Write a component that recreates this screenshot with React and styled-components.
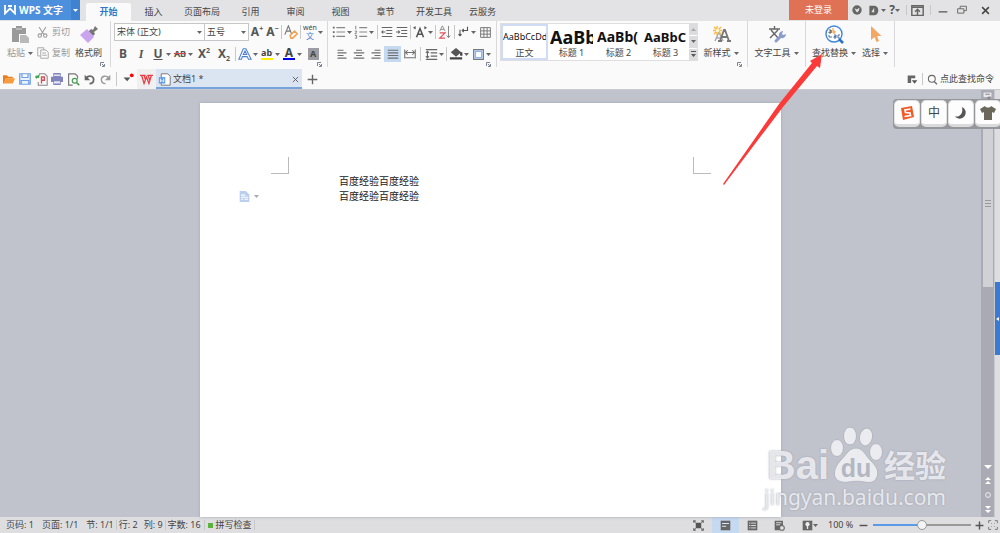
import { useState } from 'react';
import styled, { createGlobalStyle } from 'styled-components';

const tabs = ['插入', '页面布局', '引用', '审阅', '视图', '章节', '开发工具', '云服务'];

const styleList = [
  { id: 1, sample: 'AaBbCcDd', name: '正文', size: 9, weight: 400 },
  { id: 2, sample: 'AaBb', name: '标题 1', size: 18, weight: 700 },
  { id: 3, sample: 'AaBb(', name: '标题 2', size: 14, weight: 700 },
  { id: 4, sample: 'AaBbC', name: '标题 3', size: 13, weight: 700 },
];

const lines = ['百度经验百度经验', '百度经验百度经验'];

function Icon({ size = 14, children }) {
  return (
    <StIcon width={size} height={size} viewBox="0 0 16 16" aria-hidden="true">
      {children}
    </StIcon>
  );
}

function Caret() {
  return (
    <StCaret width="5" height="3" viewBox="0 0 5 3" aria-hidden="true">
      <path d="M0 0h5L2.5 3z" />
    </StCaret>
  );
}

function Tool({ label, width, caret, active, children }) {
  return (
    <StTool type="button" aria-label={label} $width={width} $active={active}>
      <span>{children}</span>
      {caret && <Caret />}
    </StTool>
  );
}

function Launcher() {
  return (
    <StLauncher type="button" aria-label="更多设置">
      <svg width="5" height="5" viewBox="0 0 5 5" fill="none" stroke="#7d8496">
        <path d="M.5 4V.5H4M2 4.5h2.5V2M2 2l2 2" />
      </svg>
    </StLauncher>
  );
}

function TitleBar() {
  return (
    <StTitleBar>
      <StBrand type="button">
        <svg width="12" height="10" viewBox="0 0 12 10" fill="none" stroke="#fff" strokeWidth="1.8">
          <path d="M1 0v8.500l5-5 5 5V0M4 1h4" />
        </svg>
        <strong>WPS 文字</strong>
        <i>
          <Caret />
        </i>
      </StBrand>
      <StTabs>
        <StTab type="button" $active>
          开始
        </StTab>
        {tabs.map(tab => (
          <StTab key={tab} type="button" $wide={tab.length > 3}>
            {tab}
          </StTab>
        ))}
      </StTabs>
      <StLogin type="button">未登录</StLogin>
      <StWindow>
        <Tool label="皮肤" width={17}>
          <Icon size={10}>
            <circle cx="8" cy="8" r="7.500" fill="#666" />
            <path d="M4 5l4 2 4-3-1 5-3 3-2-3z" fill="#e3e3e5" />
          </Icon>
        </Tool>
        <Tool label="文档" caret>
          <Icon size={11}>
            <path d="M2 1h7a6 7 0 010 14H2z" fill="#666" />
            <path d="M5 10l4-6v7z" fill="#e3e3e5" />
          </Icon>
        </Tool>
        <Tool label="帮助" width={16} caret>
          <b>?</b>
        </Tool>
        <StSep $width={7} $height={10} />
        <Tool label="隐藏功能区" width={15}>
          <Icon size={13}>
            <path d="M1 2h14v12H1zM1 4h14M8 14V7M5 9.500L8 6.500l3 3" fill="none" stroke="#666" strokeWidth="1.800" />
          </Icon>
        </Tool>
        <StSep $width={10} $height={10} />
        <Tool label="最小化" width={15}>
          <Icon size={10}>
            <path d="M1 11h14" stroke="#555" strokeWidth="2" />
          </Icon>
        </Tool>
        <Tool label="还原" width={24}>
          <Icon size={10}>
            <path d="M1 6h10v7H1zM5 6V2h10v7h-4" fill="none" stroke="#666" strokeWidth="1.500" />
          </Icon>
        </Tool>
        <Tool label="关闭" width={22}>
          <Icon size={9}>
            <path d="M2 2l12 12M14 2L2 14" stroke="#444" strokeWidth="2.600" />
          </Icon>
        </Tool>
      </StWindow>
    </StTitleBar>
  );
}

function ClipboardGroup() {
  return (
    <StGroup>
      <StBigButton type="button" $width={34} $muted>
        <svg width="19" height="19" viewBox="0 0 19 19" fill="#9a9a9a">
          <path d="M1 3h4V1h6v2h4v6H8v8H1z" />
          <path d="M5 4h6" stroke="#d5d5d5" />
          <path d="M9 10h6l3 3v5H9z" fill="#b9b9b9" />
        </svg>
        <em>
          粘贴 <Caret />
        </em>
      </StBigButton>
      <StStack>
        <StSmallButton type="button">
          <Icon size={11}>
            <path d="M3 0l7 11M13 0L6 11" stroke="#999" strokeWidth="1.500" />
            <circle cx="4" cy="12.500" r="2.500" fill="none" stroke="#999" strokeWidth="1.500" />
            <circle cx="12" cy="12.500" r="2.500" fill="none" stroke="#999" strokeWidth="1.500" />
          </Icon>
          剪切
        </StSmallButton>
        <StSmallButton type="button">
          <Icon size={12}>
            <path d="M4 12H1V1h8v3M5 4h7l3 3v8H5zM7 8h5M7 11h6" fill="none" stroke="#aaa" strokeWidth="1.300" />
          </Icon>
          复制
        </StSmallButton>
      </StStack>
      <StBigButton type="button" $width={37}>
        <svg width="19" height="19" viewBox="0 0 19 19">
          <path d="M10 6l2-2 2 1 2-4 3 3-4 3 1 2-2 2-5-5z" fill="#777" />
          <path d="M8 4l7 8-6 6-8-8z" fill="#cba4f0" />
        </svg>
        <em>格式刷</em>
      </StBigButton>
      <Launcher />
    </StGroup>
  );
}

function FontGroup() {
  return (
    <StGroup>
      <StRows>
        <StRow>
          <StSelect $width={91}>
            <select aria-label="字体" defaultValue="宋体 (正文)">
              <option>宋体 (正文)</option>
              <option>黑体</option>
            </select>
            <Caret />
          </StSelect>
          <StSelect $width={44}>
            <select aria-label="字号" defaultValue="五号">
              <option>五号</option>
              <option>四号</option>
            </select>
            <Caret />
          </StSelect>
          <Tool label="增大字号" width={16}>
            <b>
              A<sup>+</sup>
            </b>
          </Tool>
          <Tool label="减小字号" width={15}>
            <b>
              A<sup>−</sup>
            </b>
          </Tool>
          <StSep $width={3} />
          <Tool label="清除格式" width={16}>
            <Icon>
              <path d="M1 11L5 1l4 10M2.500 7h5" fill="none" stroke="#777" strokeWidth="1.300" />
              <path d="M7 12l5-5 3 3-5 5H8z" fill="#fff" stroke="#f1a14e" strokeWidth="1.800" />
            </Icon>
          </Tool>
          <StSep $width={3} />
          <Tool label="拼音指南" caret>
            <StPinyin>
              <small>wén</small>
              <small>文</small>
            </StPinyin>
          </Tool>
        </StRow>
        <StRow>
          <Tool label="加粗">
            <b>B</b>
          </Tool>
          <Tool label="倾斜">
            <StSerif>I</StSerif>
          </Tool>
          <Tool label="下划线" caret>
            <u>U</u>
          </Tool>
          <Tool label="删除线" caret>
            <s>AB</s>
          </Tool>
          <Tool label="上标" width={20}>
            <b>
              X<sup>2</sup>
            </b>
          </Tool>
          <Tool label="下标" width={20}>
            <b>
              X<sub>2</sub>
            </b>
          </Tool>
          <StSep $width={3} />
          <Tool label="文字效果" caret>
            <Icon>
              <path d="M1 14L6 2h3l6 12h-3l-1.500-3H5l-1 3zM6 8.500h4L8 4.500z" fill="#fff" stroke="#4d80cf" strokeWidth="1.200" />
            </Icon>
          </Tool>
          <Tool label="突出显示" caret>
            <StBar $color="#ffef00">
              ab
              <svg width="6" height="9" viewBox="0 0 6 9">
                <path d="M0 8l1-3 4-5" stroke="#555" strokeWidth="2" fill="none" />
              </svg>
            </StBar>
          </Tool>
          <Tool label="字体颜色" caret>
            <StBar $color="#0000f0" $strong>
              A
            </StBar>
          </Tool>
          <Tool label="字符底纹" width={20}>
            <StShade>A</StShade>
          </Tool>
        </StRow>
      </StRows>
      <Launcher />
    </StGroup>
  );
}

const alignList = [
  { id: 'left', label: '左对齐', d: 'M2 3h8M2 6.500h12M2 10h8M2 13.500h12' },
  { id: 'center', label: '居中', d: 'M4 3h8M1 6.500h14M4 10h8M1 13.500h14' },
  { id: 'right', label: '右对齐', d: 'M6 3h8M2 6.500h12M6 10h8M2 13.500h12' },
  { id: 'justify', label: '两端对齐', d: 'M1 3h14M1 6.500h14M1 10h14M1 13.500h14' },
  { id: 'spread', label: '分散对齐', d: 'M1 2v12M15 2v12M2 13h12M2 6h12M5 3L2 6l3 3M11 3l3 3-3 3' },
];

function ParagraphGroup() {
  const [align, setAlign] = useState('justify');

  return (
    <StGroup>
      <StRows>
        <StRow>
          <Tool label="项目符号" caret>
            <Icon>
              <path d="M1 2h2v2H1zM1 7h2v2H1zM1 12h2v2H1z" fill="#666" />
              <path d="M5 3h10M5 8h10M5 13h10" stroke="#888" strokeWidth="1.300" />
            </Icon>
          </Tool>
          <Tool label="编号" caret>
            <Icon>
              <path d="M2 1v4M1 7h2v1L1 10h2M1 12h2v3H1" stroke="#777" fill="none" />
              <path d="M6 3h9M6 8h9M6 13h9" stroke="#888" strokeWidth="1.300" />
            </Icon>
          </Tool>
          <StSep $width={4} />
          <Tool label="减少缩进" width={15}>
            <Icon size={12}>
              <path d="M1 2h14M7 6h8M7 10h8M1 14h14M6 8H1M3 6L1 8l2 2" fill="none" stroke="#666" strokeWidth="1.400" />
            </Icon>
          </Tool>
          <Tool label="增加缩进" width={15}>
            <Icon size={12}>
              <path d="M1 2h14M7 6h8M7 10h8M1 14h14M0 8h5M3 6l2 2-2 2" fill="none" stroke="#666" strokeWidth="1.400" />
            </Icon>
          </Tool>
          <StSep $width={3} />
          <Tool label="中文版式" caret>
            <Icon>
              <path d="M4 14L8 4l4 10M5.500 10.500h5" fill="none" stroke="#555" strokeWidth="1.800" />
              <path d="M0 3l3-2v4zM16 3l-3-2v4z" fill="#555" />
            </Icon>
          </Tool>
          <StSep $width={3} />
          <Tool label="排序" width={16}>
            <Icon>
              <path d="M2 7l3-6 3 6M3 5h4" fill="none" stroke="#888" />
              <path d="M2 9h6l-6 6h6" fill="none" stroke="#e0525d" strokeWidth="1.400" />
              <path d="M12 1v13M10 12l2 2.500 2-2.500" fill="none" stroke="#777" />
            </Icon>
          </Tool>
          <StSep $width={2} />
          <Tool label="显示标记" caret>
            <Icon size={12}>
              <path d="M14 1v5H7M9 4L7 6l2 2M4 5v8M2 11l2 2 2-2" fill="none" stroke="#555" strokeWidth="1.500" />
            </Icon>
          </Tool>
          <Tool label="表格" width={16}>
            <Icon size={13}>
              <path d="M2 2h12v12H2zM2 6h12M2 10h12M6 2v12M10 2v12" fill="none" stroke="#777" strokeWidth="1.200" />
            </Icon>
          </Tool>
        </StRow>
        <StRow $indent={2}>
          {alignList.map(item => (
            <StTool
              key={item.id}
              type="button"
              aria-label={item.label}
              $width={17}
              $active={align === item.id}
              onClick={() => setAlign(item.id)}
            >
              <Icon size={12}>
                <path d={item.d} fill="none" stroke="#6f6f6f" strokeWidth="1.400" />
              </Icon>
            </StTool>
          ))}
          <StSep $width={5} />
          <Tool label="行距" caret>
            <Icon size={13}>
              <path d="M1 2h14M7 6h8M7 10h8M1 14h14M3 4v8M1 6l2-2 2 2M1 10l2 2 2-2" fill="none" stroke="#666" strokeWidth="1.300" />
            </Icon>
          </Tool>
          <StSep $width={3} />
          <Tool label="填充" caret>
            <Icon>
              <path d="M2 6l6-5 6 5-6 5z" fill="#555" />
              <path d="M14 6v4M1 13h14" stroke="#444" strokeWidth="2.600" />
            </Icon>
          </Tool>
          <Tool label="边框" caret>
            <Icon size={13}>
              <path d="M2 2h12v12H2z" fill="#fff" stroke="#777" strokeWidth="1.400" />
              <path d="M4 4h8v8H4z" fill="#fff" stroke="#8eb4ea" strokeWidth="2" />
            </Icon>
          </Tool>
        </StRow>
      </StRows>
      <Launcher />
    </StGroup>
  );
}

function StyleGroup() {
  return (
    <StGroup>
      <StGallery>
        {styleList.map(item => (
          <StStyleCell key={item.id} type="button" $active={item.id === 1} $size={item.size} $weight={item.weight}>
            <strong>{item.sample}</strong>
            <span>{item.name}</span>
          </StStyleCell>
        ))}
        <StGalleryScroll>
          <button type="button" aria-label="上一行">
            <svg width="5" height="3" viewBox="0 0 5 3" fill="#aaa">
              <path d="M0 3h5L2.500 0z" />
            </svg>
          </button>
          <button type="button" aria-label="下一行">
            <Caret />
          </button>
          <button type="button" aria-label="全部样式">
            <svg width="5" height="6" viewBox="0 0 5 6" fill="#555">
              <path d="M0 0h5v1H0zM0 3h5L2.500 6z" />
            </svg>
          </button>
        </StGalleryScroll>
      </StGallery>
      <StBigButton type="button" $width={46}>
        <svg width="19" height="19" viewBox="0 0 19 19">
          <path d="M3 16l4-9 4 9M5 13h5" fill="none" stroke="#aaa" strokeWidth="1.500" />
          <path d="M8 16l4-11h1l4 11M9 12h7M6 16h4M15 16h4" fill="none" stroke="#777" strokeWidth="1.800" />
          <path d="M5 1v9M1 5.500h9M2 2l7 7M9 2L2 9" stroke="#f5b942" strokeWidth="1.400" />
          <circle cx="5.500" cy="5.500" r="1.800" fill="#fff6d6" />
        </svg>
        <em>
          新样式 <Caret />
        </em>
      </StBigButton>
      <Launcher />
    </StGroup>
  );
}

function Ribbon() {
  return (
    <StRibbon>
      <ClipboardGroup />
      <FontGroup />
      <ParagraphGroup />
      <StyleGroup />
      <StGroup>
        <StBigButton type="button" $width={51}>
          <svg width="19" height="19" viewBox="0 0 19 19">
            <path d="M2 4h11M7.500 1v3M4 5l7 8M11 5l-8 8" fill="none" stroke="#666" strokeWidth="1.400" />
            <path d="M9 16l5-5" stroke="#8a9dcb" strokeWidth="3" strokeLinecap="round" />
            <path d="M12 11a4 4 0 014-5l-1 3 1.500 1 2.500-1a4 4 0 01-5 4z" fill="#8a9dcb" />
          </svg>
          <em>
            文字工具 <Caret />
          </em>
        </StBigButton>
      </StGroup>
      <StGroup>
        <StBigButton type="button" $width={50}>
          <svg width="19" height="19" viewBox="0 0 19 19">
            <circle cx="9" cy="9" r="8" fill="#fff" stroke="#3f86dc" strokeWidth="1.400" />
            <path d="M14 14l4 4" stroke="#2f72c8" strokeWidth="2.600" />
            <path d="M4 5h2v3H4V7h2M6 8V5" fill="none" stroke="#666" />
            <path d="M8 3v5h2V6H8" fill="none" stroke="#f09a3e" />
            <path d="M4 10v2h3M9 10h2v3H9v-1.500h2M15 10h-2v3h2" fill="none" stroke="#4b6fa8" />
          </svg>
          <em>
            查找替换 <Caret />
          </em>
        </StBigButton>
        <StBigButton type="button" $width={32}>
          <svg width="19" height="19" viewBox="0 0 19 19">
            <path d="M5 1v14l3.500-3 2 5 2.500-1-2-5h4.500z" fill="#f2a765" />
          </svg>
          <em>
            选择 <Caret />
          </em>
        </StBigButton>
      </StGroup>
    </StRibbon>
  );
}

function QuickBar() {
  return (
    <StQuickBar>
      <Tool label="打开" width={16}>
        <Icon size={12}>
          <path d="M0 3h5l2 2h6v2H4l-3 7H0z" fill="#e87e1c" />
          <path d="M4 7h12l-3 7H1z" fill="#f79b3c" />
        </Icon>
      </Tool>
      <Tool label="保存" width={16}>
        <Icon size={12}>
          <path d="M1 1h14v14H1zM4 1v5h8V1M3 10h10v5H3z" fill="#eaf2fd" stroke="#6d9fe6" strokeWidth="1.600" />
        </Icon>
      </Tool>
      <Tool label="输出为PDF" width={16}>
        <Icon size={13}>
          <path d="M5 1h7l3 3v11H4v-4" fill="none" stroke="#888" strokeWidth="1.300" />
          <path d="M8 13V5h3.500v4H8" fill="none" stroke="#d94d58" strokeWidth="1.700" />
          <path d="M6 1L2 4v-2l-2 3 2 3V6h3z" fill="#42a556" />
        </Icon>
      </Tool>
      <Tool label="打印" width={16}>
        <Icon size={12}>
          <path d="M3 0h10v5H3zM0 5h16v7H0zM3 10h10v6H3z" fill="#8185bb" />
          <path d="M4 2h8v2H4zM4 11h8v3H4z" fill="#e5e5f4" />
        </Icon>
      </Tool>
      <Tool label="打印预览" width={16}>
        <Icon size={13}>
          <path d="M7 15H2V1h8l3 3v3" fill="none" stroke="#777" strokeWidth="1.400" />
          <circle cx="9.500" cy="9.500" r="3" fill="none" stroke="#4b9e55" strokeWidth="1.500" />
          <path d="M12 12l3 3" stroke="#4b9e55" strokeWidth="2" />
        </Icon>
      </Tool>
      <Tool label="撤销" width={16}>
        <Icon size={11}>
          <path d="M3 6c4-5 11-3 11 2 0 4-3 6-6 6" fill="none" stroke="#666" strokeWidth="2.500" />
          <path d="M1 1v8h8z" fill="#666" />
        </Icon>
      </Tool>
      <Tool label="恢复" width={16}>
        <Icon size={11}>
          <path d="M13 6C9 1 2 3 2 8c0 4 3 6 6 6" fill="none" stroke="#999" strokeWidth="2" />
          <path d="M15 1v8H7z" fill="#999" />
        </Icon>
      </Tool>
      <StSep $width={6} />
      <Tool label="自定义快速访问" width={18}>
        <Icon size={12}>
          <path d="M2 6h9l-4 5z" fill="#555" />
          <circle cx="13" cy="3" r="2.500" fill="#f00" />
        </Icon>
      </Tool>
      <StHome>
        <Tool label="首页" width={19}>
          <Icon size={13}>
            <path d="M0 3h7M9 3h7M2 3l3 10 3-8 3 8 3-10M5 3l2 6M10 3l2 6" fill="none" stroke="#ea3c45" strokeWidth="1.600" />
          </Icon>
        </Tool>
      </StHome>
      <StDocTab>
        <Icon size={13}>
          <path d="M4 1h8l3 3v11H4z" fill="#fff" stroke="#777" strokeWidth="1.200" />
          <path d="M1 5h8v8H1z" fill="#66a0e6" />
          <path d="M3 7v4l2-2 2 2V7" fill="none" stroke="#fff" />
        </Icon>
        <span>文档1 *</span>
        <Tool label="关闭文档" width={14}>
          <Icon size={7}>
            <path d="M2 2l12 12M14 2L2 14" stroke="#555" strokeWidth="2" />
          </Icon>
        </Tool>
      </StDocTab>
      <Tool label="新建" width={20}>
        <Icon size={11}>
          <path d="M8 1v14M1 8h14" stroke="#666" strokeWidth="2" />
        </Icon>
      </Tool>
      <StCommand>
        <Tool label="窗口" width={16}>
          <Icon size={11}>
            <path d="M1 2h11v4H6v7H1z" fill="#666" />
            <path d="M7 9h8l-4 5z" fill="#555" />
          </Icon>
        </Tool>
        <StSep $width={5} $height={12} />
        <label htmlFor="command">
          <Icon size={11}>
            <circle cx="7" cy="7" r="5" fill="none" stroke="#666" strokeWidth="1.500" />
            <path d="M10.500 11l4 4" stroke="#666" strokeWidth="1.800" />
          </Icon>
        </label>
        <input id="command" aria-label="查找命令" placeholder="点此查找命令" />
      </StCommand>
    </StQuickBar>
  );
}

function Document() {
  return (
    <StPage>
      <StMarks>
        <StMark $side="right" />
        <StMark $side="left" />
      </StMarks>
      <StBody>
        <StTag type="button" aria-label="段落布局">
          <Icon size={11}>
            <path d="M1 0h9l5 5v11H1z" fill="#bccfee" />
            <path d="M3 6h6M3 9h10M3 12h3M8 12h5" stroke="#fff" strokeWidth="1.500" />
          </Icon>
          <Caret />
        </StTag>
        <div>
          {lines.map((line, index) => (
            <p key={index}>{line}</p>
          ))}
        </div>
      </StBody>
    </StPage>
  );
}

function ScrollBar() {
  return (
    <StScroll>
      <StRuler type="button" aria-label="标尺">
        <Icon size={9}>
          <path d="M1 1h14v8H1z" fill="#e8e8ec" />
          <path d="M4 4h8M9 9l5 5M9 14V9h5" stroke="#777" fill="none" strokeWidth="1.500" />
        </Icon>
      </StRuler>
      <StThumb>
        <i />
        <i />
        <i />
      </StThumb>
      <StScrollButtons>
        <svg width="8" height="4" viewBox="0 0 8 4" fill="#fff">
          <path d="M0 0h8L4 4z" />
        </svg>
        <svg width="6" height="7" viewBox="0 0 6 7" fill="#fff">
          <path d="M0 3l3-3 3 3zM0 7l3-3 3 3z" />
        </svg>
        <svg width="6" height="6" viewBox="0 0 6 6" fill="none" stroke="#eee">
          <circle cx="3" cy="3" r="2.400" />
        </svg>
        <svg width="6" height="7" viewBox="0 0 6 7" fill="#fff">
          <path d="M0 0l3 3 3-3zM0 4l3 3 3-3z" />
        </svg>
      </StScrollButtons>
    </StScroll>
  );
}

function InputMethod() {
  return (
    <StIme>
      <StKey type="button" aria-label="搜狗输入法">
        <Icon size={16}>
          <path d="M2 3l11-2 2 11-11 3z" fill="#f05a28" />
          <path d="M11.500 4L6 5l.5 2.500 4.500.5.500 2.500-6 1" fill="none" stroke="#fff" strokeWidth="1.700" />
        </Icon>
      </StKey>
      <StKey type="button">中</StKey>
      <StKey type="button" aria-label="半角">
        <Icon size={14}>
          <path d="M9 1a7 7 0 11-8 11C7 13 11 8 9 1z" fill="#555" />
        </Icon>
      </StKey>
      <StKey type="button" aria-label="皮肤">
        <Icon size={16}>
          <path d="M0 4l5-3c1 2 5 2 6 0l5 3-2 4-2-1v8H4V7L2 8z" fill="#6b675a" />
        </Icon>
      </StKey>
    </StIme>
  );
}

function Watermark() {
  return (
    <StWatermark>
      <StLogo>
        <b>Bai</b>
        <StPaw>
          <svg width="54" height="58" viewBox="0 0 54 58" fill="#ebecf0" stroke="#b4b6c0">
            <ellipse cx="8" cy="22" rx="6.500" ry="8.500" />
            <ellipse cx="21" cy="10" rx="6.500" ry="9" />
            <ellipse cx="37" cy="11" rx="6.500" ry="9" transform="rotate(12 37 11)" />
            <ellipse cx="47" cy="26" rx="6.500" ry="8.500" />
            <path d="M27 22c7 0 9 7 15 13s8 10 6 16-8 6-13 5-10-1-15 0-12 0-14-5 1-12 6-17 8-12 15-12z" />
          </svg>
          <span>du</span>
        </StPaw>
        <strong>经验</strong>
      </StLogo>
      <p>jingyan.baidu.com</p>
    </StWatermark>
  );
}

function StatusBar() {
  const [zoom, setZoom] = useState(100);

  return (
    <StStatus>
      <StInfo>
        <span>页码: 1</span>
        <span>页面: 1/1</span>
        <span>节: 1/1</span>
      </StInfo>
      <StSep $width={5} $height={10} />
      <StInfo $gap={6}>
        <span>行: 2</span>
        <span>列: 9</span>
      </StInfo>
      <StSep $width={5} $height={10} />
      <StInfo>
        <span>字数: 16</span>
      </StInfo>
      <StSep $width={7} $height={10} />
      <StSpell type="button">
        <i />
        拼写检查
      </StSpell>
      <StSep $width={5} $height={10} />
      <StViews>
        <Tool label="全屏显示" width={27}>
          <Icon size={11}>
            <path d="M4 4h8v8H4z" fill="#555" />
            <path d="M1 4V1h3M12 1h3v3M15 12v3h-3M4 15H1v-3M1 1l3 3M15 1l-3 3M1 15l3-3M15 15l-3-3" fill="none" stroke="#666" strokeWidth="1.500" />
          </Icon>
        </Tool>
        <Tool label="页面视图" width={27} active>
          <Icon size={11}>
            <path d="M1 1h14v14H1z" fill="#666" />
            <path d="M3 5h10M3 9h6" stroke="#dde6f4" strokeWidth="1.500" />
          </Icon>
        </Tool>
        <Tool label="大纲视图" width={27}>
          <Icon size={11}>
            <path d="M1 1h14v14H1z" fill="#666" />
            <path d="M3 4.500h2M6 4.500h7M3 8h2M6 8h7M3 11.500h2M6 11.500h7" stroke="#ddd" strokeWidth="1.400" />
          </Icon>
        </Tool>
        <Tool label="网页视图" width={27}>
          <Icon size={11}>
            <path d="M1 1h12v7l-5 7H1z" fill="#666" />
            <path d="M3 4h8M3 7h6" stroke="#ddd" strokeWidth="1.400" />
            <circle cx="11.500" cy="11.500" r="3.500" fill="#ddd" stroke="#666" strokeWidth="1.500" />
          </Icon>
        </Tool>
        <Tool label="护眼模式" width={35} caret>
          <Icon size={11}>
            <path d="M1 1h14v14H1z" fill="#666" />
            <circle cx="8" cy="6" r="3" fill="#eee" />
            <path d="M8 8v5" stroke="#eee" strokeWidth="2" />
          </Icon>
        </Tool>
        <StPercent>{zoom} %</StPercent>
        <Tool label="缩小" width={15}>
          <Icon size={9}>
            <path d="M1 8h14" stroke="#555" strokeWidth="2.600" />
          </Icon>
        </Tool>
        <StRange
          type="range"
          aria-label="显示比例"
          min="0"
          max="200"
          value={zoom}
          onChange={event => setZoom(Number(event.target.value))}
        />
        <Tool label="放大" width={14}>
          <Icon size={9}>
            <path d="M1 8h14M8 1v14" stroke="#555" strokeWidth="2.600" />
          </Icon>
        </Tool>
        <Tool label="最佳缩放" width={14}>
          <Icon size={10}>
            <path d="M1 5V1h4M11 1h4v4M15 11v4h-4M5 15H1v-4M5 5l1 1M11 5l-1 1M5 11l1-1M11 11l-1-1" fill="none" stroke="#777" strokeWidth="1.500" />
          </Icon>
        </Tool>
      </StViews>
    </StStatus>
  );
}

function App() {
  return (
    <StApp>
      <GlobalStyle />
      <TitleBar />
      <Ribbon />
      <QuickBar />
      <StWorkspace>
        <StCanvas>
          <Document />
        </StCanvas>
        <ScrollBar />
        <StSide>
          <button type="button" aria-label="展开任务窗格">
            <svg width="3" height="4" viewBox="0 0 3 4" fill="#fff">
              <path d="M3 0v4L0 2z" />
            </svg>
          </button>
        </StSide>
        <InputMethod />
        <Watermark />
      </StWorkspace>
      <StatusBar />
      <StArrow width="104" height="134" viewBox="0 0 104 134" aria-hidden="true">
        <path d="M1 131L57 51 90 10l-2-2L100 1l-2 14-3-2L61 54 2 132z" fill="#fb3a3a" />
      </StArrow>
    </StApp>
  );
}

export default App;

const GlobalStyle = createGlobalStyle`
  * {
    box-sizing: border-box;
  }
  body {
    margin: 0;
    overflow: hidden;
  }
  body, button, input, select {
    font-family: 'Noto Sans', 'Noto Sans CJK SC', sans-serif;
    font-size: 9px;
    line-height: 12px;
    color: #444;
  }
  button {
    padding: 0;
    border: 0;
    background: none;
    white-space: nowrap;
  }
  p {
    margin: 0;
  }
`;

const StApp = styled.div`
  position: relative;
  display: flex;
  flex-direction: column;
  min-height: 100vh;
`;

const StIcon = styled.svg`
  flex-shrink: 0;
`;

const StCaret = styled.svg`
  flex-shrink: 0;
  fill: #666;
`;

const StTool = styled.button`
  display: flex;
  align-items: center;
  justify-content: center;
  flex-shrink: 0;
  width: ${({ $width }) => ($width ? `${$width}px` : 'auto')};
  min-width: ${({ $width }) => ($width ? 0 : '18px')};
  height: 16px;
  background: ${({ $active }) => ($active ? '#c5d9f1' : 'none')};

  & > span {
    display: flex;
    align-items: center;
    justify-content: center;
    min-width: ${({ $width }) => ($width ? 0 : '16px')};
  }
  & > span + svg {
    margin-right: 1px;
  }
  b,
  u,
  s {
    font-size: 12px;
    font-weight: 700;
    color: #555;
  }
  s {
    font-size: 9px;
    text-decoration-color: #e04848;
  }
  sup,
  sub {
    font-size: 7px;
    line-height: 0;
  }
`;

const StSep = styled.span`
  flex-shrink: 0;
  width: ${({ $width }) => $width}px;
  height: ${({ $height }) => $height || 14}px;
  background: linear-gradient(#c8c8cb, #c8c8cb) center / 1px 100% no-repeat;
`;

const StTitleBar = styled.header`
  display: flex;
  height: 21px;
  background: #e3e3e5;
`;

const StBrand = styled.button`
  display: flex;
  align-items: center;
  width: 80px;
  height: 20px;
  padding-left: 4px;
  background: #4b8fdd;

  strong {
    flex: 1;
    margin-left: 3px;
    text-align: left;
    font-size: 10px;
    color: #fff;
  }
  i {
    display: flex;
    align-items: center;
    justify-content: center;
    width: 9px;
    height: 20px;
    background: #3f82d2;
  }
  i > svg {
    fill: #fff;
  }
`;

const StTabs = styled.nav`
  display: flex;
  align-items: flex-end;
  flex: 1;
  padding-left: 6px;
`;

const StTab = styled.button`
  width: ${({ $wide }) => ($wide ? 52 : 45)}px;
  height: 18px;
  background: ${({ $active }) => ($active ? '#fafafa' : 'none')};
  border-radius: 2px 2px 0 0;
  color: ${({ $active }) => ($active ? '#2f78c8' : '#444')};
  font-weight: ${({ $active }) => ($active ? 700 : 400)};
`;

const StLogin = styled.button`
  width: 59px;
  height: 20px;
  background: #df7255;
  color: #fff;
`;

const StWindow = styled.div`
  display: flex;
  align-items: center;
  width: 152px;
  height: 20px;
`;

const StRibbon = styled.section`
  display: flex;
  height: 48px;
  background: #fafafa;
`;

const StGroup = styled.div`
  position: relative;
  display: flex;
  align-items: flex-start;
  height: 46px;
  padding: 2px 3px 0;
  border-right: 1px solid #d9d9dc;
`;

const StLauncher = styled.button`
  position: absolute;
  right: 5px;
  bottom: 0;
  display: flex;
`;

const StBigButton = styled.button`
  display: flex;
  flex-direction: column;
  align-items: center;
  justify-content: space-between;
  flex-shrink: 0;
  width: ${({ $width }) => $width}px;
  height: 34px;
  margin-top: 2px;
  color: ${({ $muted }) => ($muted ? '#999' : '#444')};

  em {
    display: flex;
    align-items: center;
    gap: 3px;
    font-style: normal;
  }
`;

const StStack = styled.div`
  display: flex;
  flex-direction: column;
  gap: 9px;
  width: 33px;
  padding-top: 3px;
`;

const StSmallButton = styled.button`
  display: flex;
  align-items: center;
  justify-content: space-between;
  color: #999;
`;

const StRows = styled.div`
  display: flex;
  flex-direction: column;
  gap: 4px;
`;

const StRow = styled.div`
  display: flex;
  align-items: center;
  height: 18px;
  padding-left: ${({ $indent }) => $indent || 0}px;
`;

const StSelect = styled.div`
  display: flex;
  align-items: center;
  width: ${({ $width }) => $width}px;
  height: 18px;
  padding-right: 2px;
  border: 1px solid #c6c6c9;
  background: #fff;

  & + & {
    border-left: 0;
  }
  select {
    flex: 1;
    min-width: 0;
    padding: 0 0 0 2px;
    border: 0;
    background: none;
    appearance: none;
  }
`;

const StPinyin = styled.span`
  display: flex;
  flex-direction: column;
  align-items: center;

  small {
    font-size: 7px;
    line-height: 8px;
  }
  small + small {
    font-size: 8px;
    color: #4d80cf;
  }
`;

const StSerif = styled.em`
  font-family: 'Liberation Serif', serif;
  font-size: 12px;
  font-weight: 700;
  color: #555;
`;

const StBar = styled.span`
  display: flex;
  justify-content: center;
  width: 12px;
  height: 12px;
  border-bottom: 2px solid ${({ $color }) => $color};
  font-size: ${({ $strong }) => ($strong ? 12 : 9)}px;
  font-weight: 700;
  line-height: 9px;
`;

const StShade = styled.span`
  width: 11px;
  height: 12px;
  background: #9b9da2;
  font-weight: 700;
`;

const StGallery = styled.div`
  display: flex;
  width: 198px;
  height: 38px;
  border: 1px solid #dedee0;
  background: #fff;
`;

const StStyleCell = styled.button`
  display: flex;
  flex-direction: column;
  flex-shrink: 0;
  width: 47px;
  height: 36px;
  padding-top: 2px;
  border: 1px solid ${({ $active }) => ($active ? '#cfdcf3' : '#fff')};
  box-shadow: ${({ $active }) => ($active ? 'inset 0 0 0 1px #cfdcf3' : 'none')};

  strong {
    width: 43px;
    margin: 0 auto;
    overflow: hidden;
    text-align: left;
    font-size: ${({ $size }) => $size}px;
    font-weight: ${({ $weight }) => $weight};
    line-height: 20px;
    color: #111;
  }
  span {
    align-self: center;
  }
`;

const StGalleryScroll = styled.div`
  display: flex;
  flex-direction: column;
  flex: 1;
  gap: 1px;

  button {
    display: flex;
    align-items: center;
    justify-content: center;
    flex: 1;
    background: #dcdcde;
  }
`;

const StQuickBar = styled.section`
  display: flex;
  align-items: center;
  height: 21px;
  padding-left: 1px;
  border-bottom: 1px solid #c9cad1;
  background: #fafafa;
`;

const StHome = styled.div`
  display: flex;
  align-items: center;
  height: 20px;
  background: #f0f0f1;
`;

const StDocTab = styled.div`
  display: flex;
  align-items: center;
  gap: 2px;
  width: 146px;
  height: 20px;
  padding: 2px 0 0 2px;
  border-bottom: 2px solid #76a3dc;
  background: #dbe5f2;

  & > span {
    flex: 1;
  }
`;

const StCommand = styled.div`
  display: flex;
  align-items: center;
  justify-content: flex-end;
  flex: 1;

  label {
    display: flex;
    padding: 0 2px;
  }
  input {
    width: 60px;
    padding: 0;
    border: 0;
    background: none;
    outline: none;
  }
  input::placeholder {
    color: #444;
  }
`;

const StWorkspace = styled.main`
  position: relative;
  display: flex;
  flex: 1;
  background: #c0c3cc;
`;

const StCanvas = styled.div`
  display: flex;
  justify-content: center;
  flex: 1;
  padding-top: 13px;
`;

const StPage = styled.article`
  width: 100%;
  max-width: 581px;
  padding-top: 54px;
  background: #fff;
  box-shadow: 0 0 3px #a3a6b2;
`;

const StMarks = styled.div`
  display: flex;
  justify-content: space-between;
  padding: 0 70px 0 71px;
`;

const StMark = styled.span`
  width: 18px;
  height: 17px;
  border-bottom: 1px solid #bbb;
  border-${({ $side }) => $side}: 1px solid #bbb;
`;

const StBody = styled.div`
  display: grid;
  grid-template-columns: 139px 1fr;

  p {
    font-size: 10px;
    line-height: 15px;
    color: #222;
  }
`;

const StTag = styled.button`
  display: flex;
  align-items: center;
  align-self: end;
  gap: 4px;
  padding: 0 0 2px 39px;

  & > svg:last-child {
    fill: #aaa;
  }
`;

const StScroll = styled.div`
  display: flex;
  flex-direction: column;
  align-items: center;
  width: 13px;
  background: #a9aab3;
`;

const StRuler = styled.button`
  display: flex;
  padding: 2px;
`;

const StThumb = styled.div`
  display: flex;
  flex-direction: column;
  align-items: center;
  justify-content: center;
  gap: 2px;
  width: 10px;
  height: 184px;
  padding-top: 16px;
  background: #d0d1d5;

  i {
    width: 6px;
    height: 1px;
    background: #999;
  }
`;

const StScrollButtons = styled.div`
  display: flex;
  flex-direction: column;
  align-items: center;
  gap: 8px;
  margin-top: auto;
  padding-bottom: 4px;
`;

const StSide = styled.aside`
  display: flex;
  align-items: center;
  width: 6px;
  padding-top: 30px;
  border-left: 1px solid #c9cacf;
  background: #dedee0;

  button {
    display: flex;
    align-items: center;
    justify-content: center;
    width: 5px;
    height: 73px;
    background: #3d79cd;
  }
`;

const StIme = styled.div`
  position: absolute;
  top: 9px;
  right: 0;
  display: flex;
  width: 107px;
  overflow: hidden;
  border-radius: 4px 0 0 4px;
  background: #96979c;
`;

const StKey = styled.button`
  display: flex;
  align-items: center;
  justify-content: center;
  flex-shrink: 0;
  width: 26px;
  height: 27px;
  margin: 1px 0 2px 1px;
  border-radius: 5px;
  border: 1px solid #e2e2e2;
  border-bottom: 3px solid #dadada;
  background: #fdfdfd;
  font-size: 12px;
`;

const StWatermark = styled.div`
  position: absolute;
  right: 54px;
  bottom: 7px;
  color: rgba(240, 241, 245, 0.9);
  text-shadow: 0 0 2px #9a9ca8;

  p {
    font-size: 21px;
    line-height: 26px;
  }
`;

const StLogo = styled.div`
  display: flex;
  align-items: flex-end;
  justify-content: flex-end;

  b {
    font-family: 'Liberation Sans', sans-serif;
    font-size: 40px;
    line-height: 38px;
  }
  strong {
    margin-left: 1px;
    font-size: 31px;
    line-height: 38px;
  }
`;

const StPaw = styled.div`
  display: grid;

  & > * {
    grid-area: 1 / 1;
  }
  span {
    align-self: end;
    justify-self: center;
    font-family: 'Liberation Sans', sans-serif;
    font-size: 25px;
    font-weight: 700;
    line-height: 32px;
    color: #b4b7c1;
    text-shadow: none;
  }
`;

const StStatus = styled.footer`
  display: flex;
  align-items: center;
  height: 16px;
  padding-left: 6px;
  background: #dedee0;
  white-space: nowrap;
`;

const StInfo = styled.div`
  display: flex;
  gap: ${({ $gap }) => $gap || 8}px;
`;

const StSpell = styled.button`
  display: flex;
  align-items: center;
  gap: 3px;

  i {
    width: 5px;
    height: 5px;
    background: #59b33c;
  }
`;

const StViews = styled.div`
  display: flex;
  align-items: center;
  justify-content: flex-end;
  flex: 1;
`;

const StPercent = styled.span`
  width: 28px;
`;

const StRange = styled.input`
  width: 101px;
  height: 12px;
  margin: 0;
  appearance: none;
  background: linear-gradient(to right, #5b9ae6 50%, #999 50%) center / 98px 2px no-repeat;

  &::-webkit-slider-thumb {
    appearance: none;
    width: 10px;
    height: 10px;
    border: 1px solid #999;
    border-radius: 50%;
    background: #f4f4f4;
  }
`;

const StArrow = styled.svg`
  position: absolute;
  top: 53px;
  right: 174px;
  pointer-events: none;
`;
